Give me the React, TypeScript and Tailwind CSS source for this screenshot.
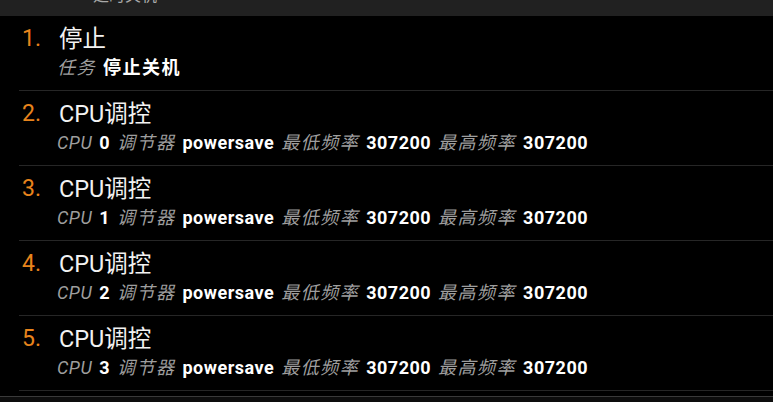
import React from "react";

const font = { fontFamily: 'Roboto, "Noto Sans CJK SC", sans-serif' };

type Part = [string, boolean];

const rows: { title: string; parts: Part[] }[] = [
  { title: "停止", parts: [["任务", false], ["停止关机", true]] },
  ...[0, 1, 2, 3].map((n) => ({
    title: "CPU调控",
    parts: [
      ["CPU", false],
      [String(n), true],
      ["调节器", false],
      ["powersave", true],
      ["最低频率", false],
      ["307200", true],
      ["最高频率", false],
      ["307200", true],
    ] as Part[],
  })),
];

const isCjk = (s: string) => /[\u4e00-\u9fff]/.test(s);

export default function App() {
  return (
    <div
      className="w-[773px] h-[402px] bg-black overflow-hidden flex flex-col"
      style={font}
    >
      <div className="h-[16px] bg-[#212121] overflow-hidden shrink-0">
        <div className="pl-[93px] mt-[-14px] text-[16px] leading-[20px] text-[#a8a8a8]">
          延时关机
        </div>
      </div>
      {rows.map((r, i) => (
        <div key={i} className="h-[75px] shrink-0 pl-[19px]">
          <div className="h-[75px] border-b border-[#262626] flex pl-[3px]">
            <div className="w-[37px] pt-[9px] text-[23px] leading-[28px] text-[#e8841c]">
              {i + 1}.
            </div>
            <div className="flex flex-col">
              <div className="pt-[9px] text-[23.5px] leading-[28px] text-[#f2f2f2]">
                {r.title}
              </div>
              <div className="mt-[4px] -ml-[2px] text-[18px] leading-[22px] tracking-[0.5px] [word-spacing:2px] whitespace-nowrap">
                {r.parts.map(([t, b], j) => {
                  const cjk = isCjk(t);
                  const cls = b
                    ? "font-bold text-white"
                    : "italic text-[#9e9e9e]";
                  return (
                    <React.Fragment key={j}>
                      {j > 0 ? " " : ""}
                      <span className={cjk ? cls + " tracking-[1.5px]" : cls}>
                        {t}
                      </span>
                    </React.Fragment>
                  );
                })}
              </div>
            </div>
          </div>
        </div>
      ))}
      <div className="mt-[5px] flex-1 border-t border-[#3a3a3a] bg-[#0d0d0d]" />
    </div>
  );
}
